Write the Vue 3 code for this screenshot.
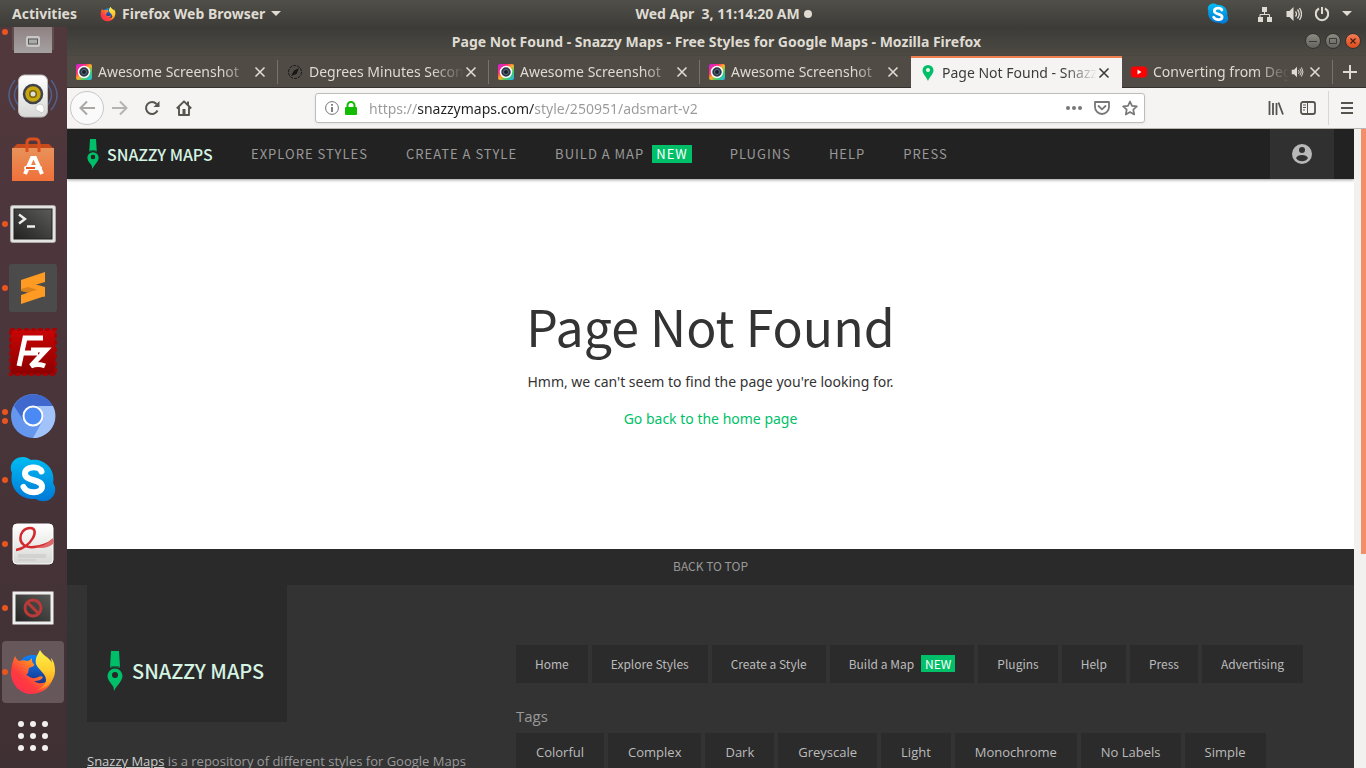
<script setup>
import { ref } from 'vue'

const tabs = [
  { title: 'Awesome Screenshot', icon: 'shot' },
  { title: 'Degrees Minutes Secon', icon: 'compass' },
  { title: 'Awesome Screenshot', icon: 'shot' },
  { title: 'Awesome Screenshot', icon: 'shot' },
  { title: 'Page Not Found - Snazz', icon: 'pin', active: true },
  { title: 'Converting from Deg', icon: 'youtube', audio: true },
]
const nav = [
  { label: 'Explore Styles' },
  { label: 'Create a Style' },
  { label: 'Build a Map', isNew: true },
  { label: 'Plugins' },
  { label: 'Help' },
  { label: 'Press' },
]
const footerNav = [{ label: 'Home' }, ...nav, { label: 'Advertising' }]
const tags = ['Colorful', 'Complex', 'Dark', 'Greyscale', 'Light', 'Monochrome', 'No Labels', 'Simple']
const dock = [
  { name: 'Files', icon: 'files', dots: 1 },
  { name: 'Rhythmbox', icon: 'speaker', dots: 0 },
  { name: 'Ubuntu Software', icon: 'software', dots: 0 },
  { name: 'Terminal', icon: 'terminal', dots: 1 },
  { name: 'Sublime Text', icon: 'sublime', dots: 1 },
  { name: 'FileZilla', icon: 'filezilla', dots: 0 },
  { name: 'Chromium', icon: 'chromium', dots: 2 },
  { name: 'Skype', icon: 'skype', dots: 1 },
  { name: 'Document Viewer', icon: 'reader', dots: 1 },
  { name: 'Blocked Screen', icon: 'blocked', dots: 1 },
  { name: 'Firefox', icon: 'firefox', dots: 1, active: true },
  { name: 'Show Applications', icon: 'grid', dots: 0 },
]
const url = ref('https://snazzymaps.com/style/250951/adsmart-v2')
</script>

<template>
  <div class="desktop">
    <svg class="defs" aria-hidden="true">
      <defs>
        <linearGradient id="ff-body" x1="0" y1="1" x2="1" y2="0">
          <stop offset="0" stop-color="#ff2a55" /><stop offset=".35" stop-color="#ff3b3f" /><stop offset=".7" stop-color="#ff9a1f" /><stop offset="1" stop-color="#ffd83a" />
        </linearGradient>
        <linearGradient id="ff-tail" x1="0" y1="0" x2="0" y2="1">
          <stop offset="0" stop-color="#fff14a" /><stop offset=".5" stop-color="#ffcf2e" /><stop offset="1" stop-color="#ff8a1c" />
        </linearGradient>
        <linearGradient id="ff-globe" x1="0" y1="0" x2="0" y2="1">
          <stop offset="0" stop-color="#0a84ff" /><stop offset="1" stop-color="#20216e" />
        </linearGradient>
        <linearGradient id="sk" x1="0" y1="0" x2="0" y2="1">
          <stop offset="0" stop-color="#00bcf2" /><stop offset="1" stop-color="#0078d7" />
        </linearGradient>
        <linearGradient id="bag" x1="0" y1="0" x2="0" y2="1">
          <stop offset="0" stop-color="#e8925a" /><stop offset="1" stop-color="#f0703a" />
        </linearGradient>
        <linearGradient id="silver" x1="0" y1="0" x2="0" y2="1">
          <stop offset="0" stop-color="#ffffff" /><stop offset="1" stop-color="#d8d8d6" />
        </linearGradient>
        <linearGradient id="screen" x1="0" y1="1" x2="1" y2="0">
          <stop offset="0" stop-color="#222" /><stop offset="1" stop-color="#5b5b59" />
        </linearGradient>
        <linearGradient id="drawer" x1="0" y1="0" x2="0" y2="1">
          <stop offset="0" stop-color="#806a6c" /><stop offset="1" stop-color="#a5a1a1" />
        </linearGradient>
        <linearGradient id="fz" x1="0" y1="0" x2="0" y2="1">
          <stop offset="0" stop-color="#c90505" /><stop offset="1" stop-color="#8c0000" />
        </linearGradient>
        <linearGradient id="rainbow" x1="0" y1="0" x2="1" y2="1">
          <stop offset="0" stop-color="#c920e8" /><stop offset=".3" stop-color="#ff2d7a" /><stop offset=".5" stop-color="#ffb020" /><stop offset=".72" stop-color="#35cf6b" /><stop offset="1" stop-color="#28b4ff" />
        </linearGradient>
        <symbol id="firefox" viewBox="0 0 48 48">
          <circle cx="24" cy="24" r="17" fill="url(#ff-globe)" />
          <path d="M6 8c1 2 2 4 4 5 3-1 6-1 8 0 2 0 4-2 5-3 0 3 0 5 2 6 1 2-2 3-5 4-1 3 0 5-3 7 3 1 5 4 9 3 3 0 5-3 8-1-1 3-5 4-9 4 7 5 15 1 18-5 3-7 0-12-2-16 5 5 5 12 3 18-3 11-13 16-22 16C11 46 2 36 2 25c0-7 2-12 4-17z" fill="url(#ff-body)" />
          <path d="M31 2c-3 6-5 8-4 14 2 6 10 9 10 16 0 5-5 9-10 10 10-1 19-9 19-19 0-5-1-10-4-13 0 2 1 3 1 5-3-6-9-7-12-13z" fill="url(#ff-tail)" />
        </symbol>
        <symbol id="skype" viewBox="0 0 48 48">
          <path d="M14 1C5 1-1 9 3 17c-3 15 8 27 24 26 9 6 21-1 19-12-1-2-1-3-2-4C47 13 35 2 22 4c-3-2-5-3-8-3z" fill="url(#sk)" />
          <path d="M32.500 15.500c-2.500-6-16.500-5.500-16.500 2 0 8.500 17 5 17 13 0 7.500-15 7.500-18.500.5" fill="none" stroke="#fff" stroke-width="6" stroke-linecap="round" />
        </symbol>
        <symbol id="snazzy" viewBox="0 0 16 40">
          <path d="M4 0h8l1 16q-5-2-10 0zM8 17.500a7.500 7.500 0 0 1 7.500 7.500c0 5-5.500 9-8.500 15l-.5-4C4 32 .5 29 .5 25A7.500 7.500 0 0 1 8 17.500z" fill="#00bf69" />
          <path d="M3 16.500q5-2 10 0" stroke="#087948" fill="none" />
          <circle cx="8" cy="24" r="3" fill="#262626" />
        </symbol>
        <symbol id="sound" viewBox="0 0 16 16">
          <path d="M1 5h3l4-4v14l-4-4H1z" fill="currentColor" />
          <path d="M10 5.500q2 2.500 0 5M12 3.500q3.500 4.500 0 9M14 2q4 6 0 12" fill="none" stroke="currentColor" stroke-width="1.300" />
        </symbol>
      </defs>
    </svg>

    <header class="topbar">
      <div class="top-left">
        <button type="button" class="top-btn">Activities</button>
        <button type="button" class="top-btn app-menu">
          <svg width="16" height="16"><use href="#firefox" /></svg>
          Firefox Web Browser
          <svg width="10" height="5" viewBox="0 0 10 5"><path d="M0 0h10L5 5z" fill="currentColor" /></svg>
        </button>
      </div>
      <button type="button" class="top-btn clock">Wed Apr&nbsp; 3, 11:14:20 AM<span class="clock-dot"></span></button>
      <div class="top-right">
        <svg class="tray-skype" width="22" height="22"><use href="#skype" /></svg>
        <svg width="16" height="16" viewBox="0 0 16 16"><path d="M5 1h5v5H5zM1 11h5v5H1zM10 11h5v5h-5z" fill="currentColor" /><path d="M7.500 6v3M3 11V8.500h9.500V11" fill="none" stroke="currentColor" /></svg>
        <svg width="17" height="16"><use href="#sound" /></svg>
        <svg width="16" height="16" viewBox="0 0 16 16"><path d="M5 2.500a6.200 6.200 0 1 0 6 0M8 1v7" fill="none" stroke="currentColor" stroke-width="2" /></svg>
        <svg width="10" height="5" viewBox="0 0 10 5"><path d="M0 0h10L5 5z" fill="currentColor" /></svg>
      </div>
    </header>

    <div class="workspace">
      <nav class="dock" aria-label="Dock">
        <button v-for="d in dock" :key="d.name" type="button" class="dock-item" :class="{ active: d.active }" :aria-label="d.name">
          <span class="dots"><i v-for="n in d.dots" :key="n"></i></span>
          <svg v-if="d.icon === 'files'" width="48" height="48" viewBox="0 0 48 48">
            <path d="M3 2h42v40H3z" fill="#5f4d50" /><path d="M5 0h38v45H5z" fill="url(#drawer)" /><rect x="17" y="28" width="14" height="11" rx="2" fill="#c9c6c6" /><rect x="19.500" y="31" width="9" height="5" fill="#aaa" stroke="#555" />
          </svg>
          <svg v-else-if="d.icon === 'speaker'" width="52" height="48" viewBox="0 0 52 48">
            <path d="M8 8q-12 15 0 30M12 12q-9 11 0 22M44 8q12 15 0 30M40 12q9 11 0 22" fill="none" stroke="#50618a" stroke-width="1.500" />
            <rect x="11.500" y="3" width="29" height="42" rx="6" fill="url(#silver)" stroke="#bbb" />
            <circle cx="26" cy="22" r="9" fill="#c7a70d" stroke="#3f4246" stroke-width="2.500" /><circle cx="26" cy="22" r="4" fill="#77630a" /><circle cx="26" cy="22" r="2.500" fill="#ddd" />
            <path d="M29 38a4 4 0 0 1 8-3q1 5-2 6z" fill="#fff" stroke="#ccc" /><circle cx="18" cy="38" r="2.500" fill="none" stroke="#ddd" />
          </svg>
          <svg v-else-if="d.icon === 'software'" width="48" height="48" viewBox="0 0 48 48">
            <path d="M8 8h32l5 5H3z" fill="#c64a1c" /><path d="M3 12h42v33H3z" fill="url(#bag)" />
            <path d="M18 16V7q0-4 4-4h4q4 0 4 4v9" fill="none" stroke="#d9501e" stroke-width="3" />
            <path d="M16 38l7-16h3l7 16M19 31h11" fill="none" stroke="#fff" stroke-width="4" /><rect x="15" y="30" width="18" height="4" rx="2" fill="#fff" /><path d="M17 32h9" stroke="#e55b22" stroke-width="2" />
          </svg>
          <svg v-else-if="d.icon === 'terminal'" width="48" height="38" viewBox="0 1 48 38">
            <rect x="1.500" y="1.500" width="45" height="37" rx="2" fill="#e3e3e1" stroke="#aaa" /><rect x="5" y="5" width="38" height="30" fill="url(#screen)" stroke="#222" />
            <path d="M10 10.500l6 4.500-6 4.500M18 22.500h8" fill="none" stroke="#eee" stroke-width="2.400" />
          </svg>
          <svg v-else-if="d.icon === 'sublime'" width="48" height="48" viewBox="0 0 48 48">
            <rect width="48" height="48" rx="3" fill="#4a4b4a" /><path d="M12 27l24 6v-9l-24-6z" fill="#d9811b" /><path d="M36 8L12 16v9l24-7zM36 23L12 31v9l24-8z" fill="#ff9a22" /><path d="M12 21l24 7v-5l-18-5z" fill="#ff9a22" />
          </svg>
          <svg v-else-if="d.icon === 'filezilla'" width="48" height="48" viewBox="0 0 48 48">
            <rect x="1.500" y="1.500" width="45" height="45" fill="url(#fz)" stroke="#a80202" stroke-width="3" stroke-dasharray="4 3" />
            <path d="M10 38L16 10h18M13 25h16M22 22h15L22 38q7-3 14 0" fill="none" stroke="#fff" stroke-width="5" />
          </svg>
          <svg v-else-if="d.icon === 'chromium'" width="46" height="46" viewBox="0 0 46 46">
            <circle cx="23" cy="23" r="22" fill="#6597ee" /><path d="M4 13A22 22 0 0 1 43 13H23L14 28z" fill="#4069d0" /><path d="M43 13A22 22 0 0 1 23 45l10-18q2-8-5-14z" fill="#a2c3fa" /><circle cx="23" cy="23" r="9.500" fill="#4b8af5" stroke="#fff" stroke-width="2" />
          </svg>
          <svg v-else-if="d.icon === 'skype'" width="48" height="48"><use href="#skype" /></svg>
          <svg v-else-if="d.icon === 'reader'" width="44" height="44" viewBox="0 0 44 44">
            <rect x="2" y="2" width="40" height="40" rx="4" fill="url(#silver)" stroke="#fff" />
            <path d="M5 28C20 26 30 6 19 6 7 6 4 27 23 25q12-1 19-7" fill="none" stroke="#d32a2e" stroke-width="2.500" /><path d="M24 25q10 0 18-9v6q-8 6-18 3z" fill="#e16567" />
            <path d="M7 33h28M7 35h28M7 38h18" stroke="#c4c4c4" />
          </svg>
          <svg v-else-if="d.icon === 'blocked'" width="42" height="34" viewBox="0 0 42 34">
            <rect x="2" y="2" width="38" height="30" fill="url(#screen)" stroke="#eee" stroke-width="3" /><circle cx="21" cy="17" r="8" fill="none" stroke="#b93a38" stroke-width="3" /><path d="M15.500 11.500l11 11" stroke="#b93a38" stroke-width="3" />
          </svg>
          <svg v-else-if="d.icon === 'firefox'" width="48" height="48"><use href="#firefox" /></svg>
          <svg v-else width="32" height="32" viewBox="0 0 32 32" fill="#f2f1f0">
            <template v-for="r in 3" :key="r"><circle v-for="c in 3" :key="c" :cx="c * 12 - 8" :cy="r * 12 - 8" r="3" /></template>
          </svg>
        </button>
      </nav>

      <section class="window">
        <div class="titlebar">
          <span class="title">Page Not Found - Snazzy Maps - Free Styles for Google Maps - Mozilla Firefox</span>
          <div class="controls">
            <button type="button" aria-label="Minimize"><svg width="8" height="8" viewBox="0 0 8 8"><path d="M0 4.500h8" stroke="#3c3b37" /></svg></button>
            <button type="button" aria-label="Maximize"><svg width="8" height="8" viewBox="0 0 8 8"><path d="M.5 1.500h7v5h-7z" fill="none" stroke="#3c3b37" /></svg></button>
            <button type="button" class="close" aria-label="Close"><svg width="8" height="8" viewBox="0 0 8 8"><path d="M1.500 1.500l5 5M6.500 1.500l-5 5" stroke="#45210f" stroke-width="1.300" /></svg></button>
          </div>
        </div>

        <div class="tabs">
          <div v-for="(t, i) in tabs" :key="i" class="tab" :class="{ active: t.active, 'before-active': i === 3 }">
            <svg v-if="t.icon === 'shot'" width="16" height="16" viewBox="0 0 16 16"><rect width="16" height="16" rx="2" fill="url(#rainbow)" /><circle cx="8" cy="8" r="5.500" fill="#2d3846" stroke="#fff" stroke-width="1.500" /><circle cx="8" cy="8" r="2.500" fill="#152030" stroke="#607080" /></svg>
            <svg v-else-if="t.icon === 'compass'" width="16" height="16" viewBox="0 0 16 16"><circle cx="8" cy="8" r="6.500" fill="none" stroke="#171717" stroke-dasharray="3 1" /><path d="M12 4l-2.500 6L4 12l3-5.500z" fill="#171717" /></svg>
            <svg v-else-if="t.icon === 'pin'" width="16" height="16" viewBox="0 0 16 16"><path d="M8 0a5.500 5.500 0 0 1 5.500 5.500C13.500 9 9.500 12 8 16 6.500 12 2.500 9 2.500 5.500A5.500 5.500 0 0 1 8 0z" fill="#00bf69" /><circle cx="8" cy="5" r="2" fill="#f4f3f2" /></svg>
            <svg v-else width="16" height="16" viewBox="0 0 16 16"><rect y="2.500" width="16" height="11" rx="3" fill="#f00" /><path d="M6.500 5.500v5l4-2.500z" fill="#fff" /></svg>
            <span class="tab-title">{{ t.title }}</span>
            <svg v-if="t.audio" class="audio" width="14" height="12"><use href="#sound" /></svg>
            <button type="button" class="tab-close" aria-label="Close tab"><svg width="12" height="12" viewBox="0 0 12 12"><path d="M1.500 1.500l9 9M10.500 1.500l-9 9" stroke="currentColor" stroke-width="1.600" /></svg></button>
          </div>
          <button type="button" class="new-tab" aria-label="New tab"><svg width="14" height="14" viewBox="0 0 14 14"><path d="M7 0v14M0 7h14" stroke="currentColor" stroke-width="2" /></svg></button>
        </div>

        <div class="toolbar">
          <button type="button" class="back" aria-label="Back"><svg width="16" height="16" viewBox="0 0 16 16"><path d="M16 8H1M8 1.500L1.500 8 8 14.500" fill="none" stroke="currentColor" stroke-width="2" /></svg></button>
          <button type="button" class="tool faded" aria-label="Forward"><svg width="16" height="16" viewBox="0 0 16 16"><path d="M0 8h15M8 1.500L14.500 8 8 14.500" fill="none" stroke="currentColor" stroke-width="2" /></svg></button>
          <button type="button" class="tool" aria-label="Reload"><svg width="16" height="16" viewBox="0 0 16 16"><path d="M13.500 10.500A6 6 0 1 1 12.500 4" fill="none" stroke="currentColor" stroke-width="2" /><path d="M15.500 1v6h-6z" fill="currentColor" /></svg></button>
          <button type="button" class="tool" aria-label="Home"><svg width="16" height="16" viewBox="0 0 16 16"><path d="M.8 8.500L8 1.300l7.200 7.200M3 7v8h10V7" fill="none" stroke="currentColor" stroke-width="1.900" stroke-linejoin="round" /><path d="M6.500 15V9h3v6z" fill="currentColor" /><path d="M12 1.500v4" stroke="currentColor" stroke-width="2" /></svg></button>
          <div class="urlbar">
            <svg width="14" height="14" viewBox="0 0 14 14"><circle cx="7" cy="7" r="6.400" fill="none" stroke="#737373" /><path d="M7 6v5M7 3v1.800" stroke="#737373" stroke-width="1.800" /></svg>
            <svg width="12" height="14" viewBox="0 0 12 14"><rect y="6" width="12" height="8" rx="1" fill="#12bc00" /><path d="M2.500 7V4.500a3.500 3.500 0 0 1 7 0V7" fill="none" stroke="#12bc00" stroke-width="2" /></svg>
            <input v-model="url" class="url" type="text" aria-label="Address" spellcheck="false" />
            <button type="button" aria-label="Page actions"><svg width="16" height="4" viewBox="0 0 16 4" fill="currentColor"><circle cx="2" cy="2" r="2" /><circle cx="8" cy="2" r="2" /><circle cx="14" cy="2" r="2" /></svg></button>
            <button type="button" aria-label="Save to Pocket"><svg width="16" height="16" viewBox="0 0 16 16" fill="none" stroke="currentColor" stroke-width="1.800"><path d="M1 2h14v5a7 7 0 0 1-14 0z" stroke-linejoin="round" /><path d="M4.500 6L8 9.300 11.500 6" stroke-linecap="round" /></svg></button>
            <button type="button" aria-label="Bookmark"><svg width="16" height="16" viewBox="0 0 16 16"><path d="M8 1.500l2 4.300 4.800.6-3.500 3.200.9 4.900L8 12.100l-4.200 2.400.9-4.900L1.200 6.400 6 5.800z" fill="none" stroke="currentColor" stroke-width="1.700" stroke-linejoin="round" /></svg></button>
          </div>
          <div class="tools-end">
            <button type="button" aria-label="Library"><svg width="16" height="14" viewBox="0 0 16 14"><path d="M1.500 0v14M5 2v12M8.500 2v12M10.500 1.500L15 13.500" stroke="currentColor" stroke-width="1.800" /></svg></button>
            <button type="button" aria-label="Sidebars"><svg width="16" height="14" viewBox="0 0 16 14"><rect x="1" y="1" width="14" height="12" rx="2" fill="none" stroke="currentColor" stroke-width="1.800" /><path d="M7.500 1v12M3 4h3M3 6.500h3M3 9h2" stroke="currentColor" /></svg></button>
          </div>
          <button type="button" class="menu" aria-label="Menu"><svg width="12" height="12" viewBox="0 0 12 12"><path d="M0 1h12M0 6h12M0 11h12" stroke="currentColor" stroke-width="2" /></svg></button>
        </div>

        <div class="viewport">
          <div class="page">
            <header class="site-head">
              <a href="#" class="logo"><svg width="12" height="30"><use href="#snazzy" /></svg>SNAZZY MAPS</a>
              <nav class="site-nav">
                <a v-for="n in nav" :key="n.label" href="#">{{ n.label }}<span v-if="n.isNew" class="new">NEW</span></a>
              </nav>
              <button type="button" class="account" aria-label="Account"><svg width="20" height="20" viewBox="0 0 20 20"><circle cx="10" cy="10" r="10" fill="#b8b8b8" /><circle cx="10" cy="6" r="3" fill="#303030" /><path d="M4 14q1.500-3 6-3t6 3q-2 3.200-6 3.200T4 14z" fill="#303030" /></svg></button>
            </header>

            <main>
              <h1>Page Not Found</h1>
              <p>Hmm, we can't seem to find the page you're looking for.</p>
              <p><a href="#">Go back to the home page</a></p>
            </main>

            <footer>
              <a href="#" class="to-top">BACK TO TOP</a>
              <div class="foot-cols">
                <div class="about">
                  <a href="#" class="foot-logo"><svg width="16" height="40"><use href="#snazzy" /></svg>SNAZZY MAPS</a>
                  <p><a href="#">Snazzy Maps</a> is a repository of different styles for Google Maps</p>
                </div>
                <div class="links">
                  <nav class="chips nav-chips">
                    <a v-for="n in footerNav" :key="n.label" href="#">{{ n.label }}<span v-if="n.isNew" class="new">NEW</span></a>
                  </nav>
                  <h2>Tags</h2>
                  <nav class="chips"><a v-for="t in tags" :key="t" href="#">{{ t }}</a></nav>
                </div>
              </div>
            </footer>
          </div>
          <div class="scrollbar"><div class="thumb"></div></div>
        </div>
      </section>
    </div>
  </div>
</template>

<style>
body { margin: 0; overflow: hidden; }
</style>

<style scoped>
* { box-sizing: border-box; }
.desktop { height: 100vh; display: flex; flex-direction: column; overflow: hidden; font-family: "Noto Sans", "Open Sans", sans-serif; font-size: 14px; }
.defs { position: absolute; width: 0; height: 0; }
button { border: 0; background: none; padding: 0; margin: 0; color: inherit; font: inherit; display: flex; align-items: center; justify-content: center; }
svg { flex: none; display: block; }
a { text-decoration: none; color: inherit; }

.topbar { flex: none; height: 27px; display: grid; grid-template-columns: 15fr auto 13fr; align-items: center; padding: 0 14px 0 12px; background: linear-gradient(#514f49, #3d3c38); color: #dfdbd2; }
.top-left, .top-right { display: flex; align-items: center; }
.top-left { gap: 23px; }
.top-btn { font-weight: 700; font-size: 14px; white-space: nowrap; }
.app-menu { gap: 6px; }
.clock-dot { width: 8px; height: 8px; border-radius: 50%; background: #dfdbd2; margin-left: 4px; }
.top-right { justify-content: flex-end; gap: 12px; }
.tray-skype { margin-right: 16px; }

.workspace { flex: 1; min-height: 0; display: flex; }
.dock { flex: none; width: 67px; display: flex; flex-direction: column; justify-content: flex-end; overflow: hidden; background: linear-gradient(#51383d, #49353a 50%, #3f3033); }
.dock-item { position: relative; flex: none; height: 64px; width: 66px; }
.dock-item.active::before { content: ""; position: absolute; inset: 1px 2px; border-radius: 4px; background: #66575a; }
.dock-item svg { position: relative; }
.dots { position: absolute; z-index: 1; left: 2px; top: 0; bottom: 0; display: flex; flex-direction: column; justify-content: center; gap: 3px; }
.dots i { width: 6px; height: 6px; border-radius: 50%; background: #e95420; }

.window { flex: 1; min-width: 0; display: flex; flex-direction: column; }
.titlebar { flex: none; height: 28px; position: relative; display: flex; align-items: center; justify-content: center; background: linear-gradient(#3c3b37, #4d4a44); color: #dfdbd2; font-weight: 700; font-size: 14px; }
.controls { position: absolute; right: 5px; top: 6px; display: flex; gap: 4px; }
.controls button { width: 16px; height: 16px; border-radius: 50%; background: linear-gradient(#8c8a83, #65635d); border: 1px solid #34332f; }
.controls .close { background: linear-gradient(#f47b55, #dd4c1c); }

.tabs { flex: none; height: 33px; display: flex; background: #504c45; color: #dfdbd2; border-top: 1px solid #4a4740; }
.tab { position: relative; flex: 1; min-width: 0; display: flex; align-items: center; padding: 0 12px 0 9px; border-bottom: 1px solid #33322e; font-size: 14px; }
.tab::after { content: ""; position: absolute; right: 0; top: 4px; bottom: 3px; width: 1px; background: #76736b; }
.tab.active::after, .tab.before-active::after { display: none; }
.tab.active { background: #f5f4f3; color: #3c3b37; border-bottom: 0; border-top: 2px solid #ef7f4f; padding-bottom: 1px; }
.tab-title { flex: 1; margin: 0 1px 0 6px; white-space: nowrap; overflow: hidden; mask-image: linear-gradient(to left, transparent, #000 32px); }
.audio { margin-right: 5px; }
.tab-close { width: 12px; height: 12px; }
.new-tab { flex: none; width: 33px; height: 32px; border-bottom: 1px solid #33322e; }

.toolbar { flex: none; height: 41px; display: flex; align-items: center; padding: 0 13px 0 3px; background: #f5f4f3; border-bottom: 1px solid #b9b6b2; color: #56544f; }
.back { width: 34px; height: 34px; border-radius: 50%; border: 1px solid #c9c7c5; background: #fafafa; color: #a9a8a6; }
.tool { width: 32px; height: 32px; }
.tool.faded { color: #b5b3b1; }
.urlbar { flex: 1; height: 30px; margin-left: 115px; padding: 0 3px 0 9px; display: flex; align-items: center; gap: 6px; background: #fff; border: 1px solid #bfbdba; border-radius: 3px; box-shadow: 0 1px 3px #0001; color: #777; }
.url { flex: 1; min-width: 0; border: 0; outline: 0; padding: 0; margin-left: 6px; height: 24px; font: 14px "Noto Sans", "Open Sans", sans-serif; color: transparent; background: linear-gradient(to right, #999 49px, #222 49px, #222 165px, #999 165px); background-clip: text; }
.urlbar button { width: 22px; height: 24px; }
.tools-end { display: flex; gap: 16px; margin-left: 123px; padding-right: 12px; margin-right: 12px; border-right: 1px solid #d8d6d4; height: 34px; }

.viewport { flex: 1; min-height: 0; display: flex; }
.page { flex: 1; min-width: 0; display: flex; flex-direction: column; overflow: hidden; background: #333; font-family: "Open Sans", sans-serif; }
.scrollbar { flex: none; width: 12px; background: #f2f1f0; display: flex; justify-content: flex-end; }
.thumb { width: 5px; height: 66.5%; background: #f28f69; }
.site-head { flex: none; height: 50px; display: flex; align-items: center; padding: 0 20px; background: #222; position: relative; box-shadow: 0 1px 3px #0006; font-family: "Noto Sans CJK SC", sans-serif; }
.logo { display: flex; align-items: center; gap: 8px; color: #d5f3e2; font-size: 16px; font-weight: 500; width: 145px; white-space: nowrap; }
.site-nav { flex: 1; display: flex; }
.site-nav a { padding: 0 19px; text-transform: uppercase; letter-spacing: 1px; font-size: 13px; line-height: 18px; color: #999; white-space: nowrap; }
.new { display: inline-block; margin-left: 8px; padding: 0 4px; background: #00bf69; color: #fff; }
.account { width: 64px; height: 50px; background: #303030; }
main { flex: none; background: #fff; color: #333; text-align: center; padding: 112px 20px 120px; }
h1 { margin: 0; font: 400 50px/68px "Noto Sans CJK SC", sans-serif; }
main p { margin: 0 0 17px; font-family: "Noto Sans", "Open Sans", sans-serif; font-size: 14px; line-height: 20px; }
main p:last-child { margin: 0; }
h1 + p { margin-top: 13px; }
main a { color: #00bf69; }
footer { flex: 1; color: #999; }
.to-top { display: block; height: 36px; line-height: 34px; text-align: center; background: #2a2a2a; font-family: "Noto Sans CJK SC", sans-serif; font-size: 12px; }
.foot-cols { display: grid; grid-template-columns: 1fr 2fr; }
.about { padding: 0 20px; }
.foot-logo { width: 200px; height: 137px; padding: 34px 20px 0; display: flex; align-items: center; gap: 9px; background: #2a2a2a; color: #d5f3e2; font: 500 20px "Noto Sans CJK SC", sans-serif; white-space: nowrap; }
.about p { margin: 28px 0 0; line-height: 22px; white-space: nowrap; font-size: 13px; }
.about p a { color: #ccc; text-decoration: underline; }
.links { padding: 60px 20px 0; }
.chips { display: flex; flex-wrap: wrap; gap: 4px; font-size: 13px; }
.chips a { padding: 0 20px; background: #2b2b2b; color: #bbb; line-height: 38px; white-space: nowrap; }
.nav-chips { font-family: "Noto Sans CJK SC", sans-serif; font-size: 12px; }
.nav-chips a { padding: 0 19px; line-height: 38px; }
.nav-chips .new { line-height: 17px; margin-left: 7px; }
h2 { margin: 22px 0 6px; font-size: 15px; line-height: 22px; font-weight: 400; color: #999; }
</style>
